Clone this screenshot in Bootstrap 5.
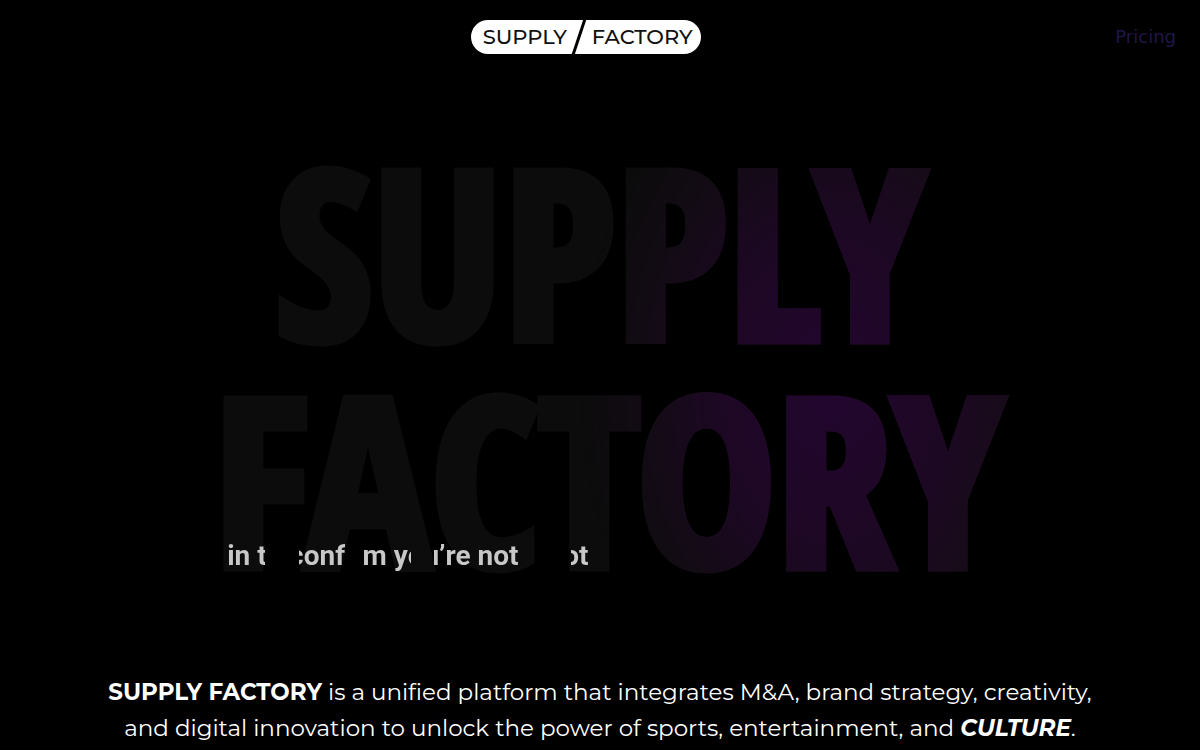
<!DOCTYPE html>
<html lang="en">
<head>
<meta charset="utf-8">
<meta name="viewport" content="width=device-width, initial-scale=1">
<title>Supply Factory</title>
<link href="https://cdn.jsdelivr.net/npm/bootstrap@5.3.0/dist/css/bootstrap.min.css" rel="stylesheet">
<style>
  body { background: #000; color: #fff; font-family: Montserrat, "Open Sans", sans-serif; }
  .side-slot { width: 32px; }
  .brand-pill {
    height: 34px; width: 230px; color: #111; font-size: 21px; line-height: 34px; font-weight: 500;
    font-family: Montserrat, "Liberation Sans", sans-serif;
  }
  .brand-pill:hover { color: #111; }
  .brand-slash { left: 92px; }
  .price-link { font: 18px/24px "DejaVu Sans", sans-serif; color: #1f1747; }
  .stage { width: fit-content; margin-top: 78px; }
  .wordmark {
    font-family: "Open Sans Condensed", "Roboto Condensed", sans-serif;
    font-weight: 700; font-size: 234px; line-height: 227px; padding: 0 8px;
    color: transparent; -webkit-text-stroke: 9px transparent;
    background:
      radial-gradient(ellipse 250px 360px at 78% 56%, #23062f 0%, #1d0824 45%, rgba(23,11,26,.7) 72%, rgba(12,12,12,0) 100%),
      linear-gradient(90deg, #0c0c0c 0%, #0c0c0c 70%, #1a0d18 90%);
    -webkit-background-clip: text; background-clip: text;
  }
  .wordmark .second { padding-left: 16px; }
  .caption-line {
    left: 38px; bottom: 16px; font: 700 28px/36px Roboto, sans-serif; color: transparent;
    background: linear-gradient(90deg,
      #c8c8c8 38px, transparent 38px 72px, #c8c8c8 72px 118px, transparent 118px 137px,
      #c8c8c8 137px 184px, transparent 184px 207px, #c8c8c8 207px 292px,
      transparent 292px 344px, #c8c8c8 344px);
    -webkit-background-clip: text; background-clip: text;
  }
  .intro { font-size: 23px; line-height: 36px; max-width: 1040px; margin-top: 84px; }
</style>
</head>
<body>
<nav class="d-flex justify-content-between align-items-center px-4 pt-3" aria-label="Main">
  <span class="side-slot"></span>
  <a class="brand-pill d-flex justify-content-between bg-white rounded-pill text-decoration-none position-relative my-1 px-2" href="#">
    <span class="ps-1">SUPPLY</span>
    <svg class="brand-slash position-absolute top-0" width="36" height="34" viewBox="0 0 36 34" aria-hidden="true"><path d="M10 35L22-1" stroke="#000" stroke-width="3"/></svg>
    <span>FACTORY</span>
  </a>
  <a class="price-link text-decoration-none" href="#">Pricing</a>
</nav>
<main>
  <div class="stage position-relative mx-auto">
    <h1 class="wordmark text-center text-nowrap mb-0"><span class="d-block">SUPPLY</span><span class="second d-block">FACTORY</span></h1>
    <p class="caption-line position-absolute text-nowrap mb-0">in to confirm you’re not a bot</p>
  </div>
  <p class="intro text-center mx-auto mb-0 px-3"><strong>SUPPLY FACTORY</strong> is a unified platform that integrates M&amp;A, brand strategy, creativity, and digital innovation to unlock the power of sports, entertainment, and <strong><em>CULTURE</em></strong>.</p>
</main>
<script src="https://cdn.jsdelivr.net/npm/bootstrap@5.3.0/dist/js/bootstrap.bundle.min.js"></script>
</body>
</html>
